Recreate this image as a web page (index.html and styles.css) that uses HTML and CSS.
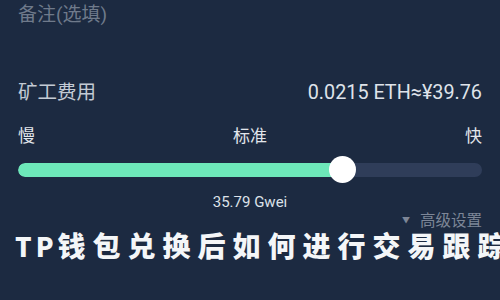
FILE: index.html
```html
<!DOCTYPE html>
<html lang="zh">
<head>
<meta charset="utf-8">
<link rel="stylesheet" href="styles.css">
</head>
<body>
<div class="page">
  <div class="note">备注(选填)</div>
  <div class="fee">
    <span class="fee-label">矿工费用</span>
    <span class="fee-value">0.0215 ETH≈¥39.76</span>
  </div>
  <div class="speeds">
    <span>慢</span>
    <span>标准</span>
    <span>快</span>
  </div>
  <div class="slider">
    <div class="track">
      <div class="fill" style="width: 70%"></div>
    </div>
    <div class="knob" style="left: 70%"></div>
  </div>
  <div class="gwei">35.79 Gwei</div>
  <div class="advanced"><span class="caret">▼</span>高级设置</div>
  <div class="title"><span class="title-latin">TP</span>钱包兑换后如何进行交易跟踪</div>
</div>
</body>
</html>
```

FILE: styles.css
```css
html, body {
  margin: 0;
  padding: 0;
}
body {
  width: 500px;
  height: 300px;
  overflow: hidden;
  background: #1c2a41;
  font-family: Roboto, "Noto Sans CJK SC", sans-serif;
}
.page {
  padding: 3px 18px 0 18px;
  display: flex;
  flex-direction: column;
}
.note {
  font-size: 19px;
  line-height: 24px;
  color: #6f7a8b;
}
.fee {
  margin-top: 54px;
  display: flex;
  justify-content: space-between;
  align-items: baseline;
  line-height: 24px;
}
.fee-label {
  font-size: 19.5px;
  color: #c3cad4;
}
.fee-value {
  font-size: 19.8px;
  color: #dfe3ea;
}
.speeds {
  margin-top: 20px;
  display: flex;
  justify-content: space-between;
  font-size: 17px;
  line-height: 22px;
  color: #e2e6ec;
}
.slider {
  position: relative;
  margin-top: 9px;
  height: 27px;
  display: flex;
  align-items: center;
}
.track {
  flex: 1;
  height: 14px;
  border-radius: 7px;
  background: #2f3d59;
  overflow: hidden;
}
.fill {
  height: 100%;
  background: #6de8b9;
  border-radius: 7px 0 0 7px;
}
.knob {
  position: absolute;
  top: 0;
  width: 27px;
  height: 27px;
  margin-left: -13.5px;
  border-radius: 50%;
  background: #ffffff;
}
.gwei {
  margin-top: 10px;
  text-align: center;
  font-size: 15px;
  line-height: 18px;
  color: #dde2e9;
}
.advanced {
  margin-top: 1px;
  align-self: flex-end;
  font-size: 15.5px;
  line-height: 18px;
  color: #7d8697;
  display: flex;
  align-items: center;
}
.caret {
  font-size: 8px;
  margin-right: 10px;
  color: #7d8697;
}
.title {
  margin-top: -2px;
  margin-left: -3px;
  white-space: nowrap;
  font-family: "Noto Sans CJK SC", sans-serif;
  font-weight: 900;
  font-size: 28px;
  line-height: 34px;
  letter-spacing: 7px;
  color: #f4f6f8;
}
.title-latin {
  font-size: 26px;
  letter-spacing: 4px;
}
```
